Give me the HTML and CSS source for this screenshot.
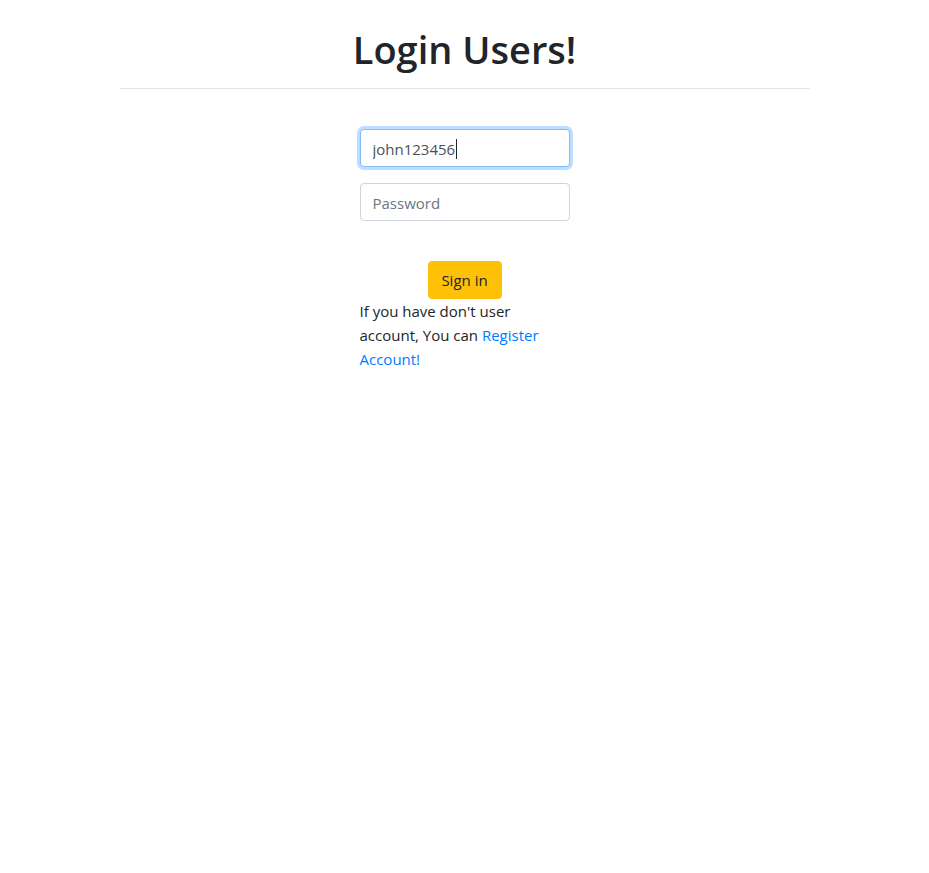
FILE: index.html
```html
<!DOCTYPE html>
<html lang="en">
<head>
<meta charset="utf-8">
<title>Login Users!</title>
<link rel="stylesheet" href="styles.css">
</head>
<body>
<div class="container">
  <h1 class="title">Login Users!</h1>
  <hr class="divider">
  <form class="login-form">
    <div class="form-group">
      <div class="field-wrap">
        <input class="form-control is-focused" type="text" value="john123456" name="username">
        <span class="caret"></span>
      </div>
    </div>
    <div class="form-group">
      <input class="form-control" type="password" placeholder="Password" name="password">
    </div>
    <div class="actions">
      <button class="btn-warning" type="button">Sign in</button>
    </div>
    <p class="note">If you have don't user account, You can <a href="#" class="link">Register Account!</a></p>
  </form>
</div>
</body>
</html>
```

FILE: styles.css
```css
* { box-sizing: border-box; }
html, body { margin: 0; padding: 0; background: #fff; }
body {
  font-family: "Open Sans", "Noto Sans", "Liberation Sans", sans-serif;
  font-size: 15px;
  line-height: 24px;
  color: #212529;
}
.container {
  width: 720px;
  margin: 0 auto;
  padding: 0 15px;
}
.title {
  margin: 0 0 16px;
  padding-top: 26px;
  font-size: 38px;
  font-weight: 600;
  line-height: 46px;
  text-align: center;
  color: #212529;
}
.divider {
  margin: 0;
  border: 0;
  border-top: 1px solid rgba(0,0,0,.1);
  height: 0;
}
.login-form {
  width: 210px;
  margin: 40px auto 0;
}
.form-group { margin-bottom: 16px; }
.field-wrap { position: relative; }
.form-control {
  display: block;
  width: 100%;
  height: 38px;
  padding: 7px 12px 5px;
  font-family: inherit;
  font-size: 15px;
  line-height: 24px;
  color: #495057;
  background: #fff;
  border: 1px solid #ced4da;
  border-radius: 4px;
  outline: none;
}
.form-control::placeholder { color: #6c757d; opacity: 1; }
.form-control.is-focused {
  border-color: #80bdff;
  box-shadow: 0 0 0 3px rgba(0,123,255,.25);
}
.caret {
  position: absolute;
  left: 96px;
  top: 10px;
  width: 1px;
  height: 20px;
  background: #212529;
}
.actions {
  display: flex;
  justify-content: center;
  padding-top: 24px;
}
.btn-warning {
  height: 38px;
  width: 74px;
  padding: 6px 0;
  font-family: inherit;
  font-size: 15px;
  line-height: 24px;
  color: #212529;
  background: #ffc107;
  border: 1px solid #ffc107;
  border-radius: 4px;
  cursor: pointer;
}
.note { margin: 0; }
.link { color: #007bff; text-decoration: none; }
```
